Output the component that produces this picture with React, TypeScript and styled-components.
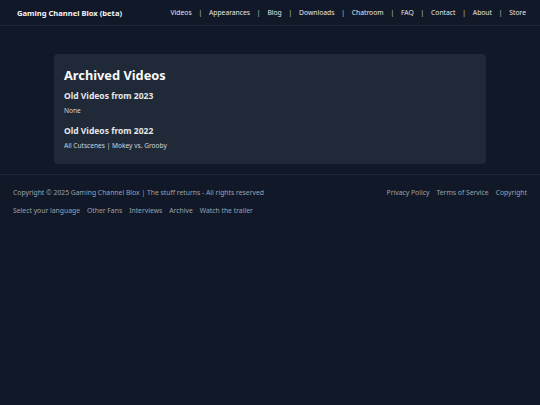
import { Fragment } from 'react';
import styled, { createGlobalStyle } from 'styled-components';

const GlobalStyle = createGlobalStyle`
  html, body {
    margin: 0;
    padding: 0;
    background-color: #111827;
    font-family: 'Noto Sans', 'Open Sans', sans-serif;
    color: #e5e7eb;
  }

  * {
    box-sizing: border-box;
  }
`;

const Page = styled.div`
  min-height: 405px;
  background-color: #111827;
`;

const Header = styled.header`
  display: flex;
  align-items: center;
  justify-content: space-between;
  height: 26px;
  padding: 0 14px 0 17px;
  border-bottom: 1px solid #1f2937;
`;

const Brand = styled.h1`
  margin: 0;
  font-size: 7.6px;
  font-weight: 700;
  color: #f3f4f6;
`;

const Nav = styled.nav`
  display: flex;
  align-items: center;
  gap: 6.8px;
  font-size: 6.75px;
  color: #e5e7eb;
`;

const NavLink = styled.a`
  color: inherit;
  text-decoration: none;
`;

const Separator = styled.span`
  color: #d1d5db;
`;

const Main = styled.main`
  padding: 28px 54px 10px;
`;

const Card = styled.section`
  background-color: #1f2937;
  border-radius: 4px;
  padding: 12px 10px 12px;
`;

const CardTitle = styled.h2`
  margin: 0 0 6px;
  font-size: 12.8px;
  line-height: 18px;
  font-weight: 700;
  color: #f9fafb;
`;

const GroupTitle = styled.h3`
  margin: 0 0 3px;
  font-size: 8.5px;
  line-height: 12px;
  font-weight: 700;
  color: #e5e7eb;
`;

const GroupText = styled.p<{ $last?: boolean }>`
  margin: 0 0 ${({ $last }) => ($last ? '0' : '8px')};
  font-size: 6.6px;
  line-height: 12px;
  color: #d1d5db;
`;

const Footer = styled.footer`
  border-top: 1px solid #1f2937;
  padding: 13px 13px;
  font-size: 6.8px;
  color: #9ca3af;
`;

const FooterTop = styled.div`
  display: flex;
  justify-content: space-between;
  align-items: center;
  margin-bottom: 9px;
`;

const LinkRow = styled.div`
  display: flex;
  gap: 7px;
`;

const FooterLink = styled.a`
  color: inherit;
  text-decoration: none;
`;

const navItems = [
  'Videos',
  'Appearances',
  'Blog',
  'Downloads',
  'Chatroom',
  'FAQ',
  'Contact',
  'About',
  'Store',
];

const legalLinks = ['Privacy Policy', 'Terms of Service', 'Copyright'];

const extraLinks = [
  'Select your language',
  'Other Fans',
  'Interviews',
  'Archive',
  'Watch the trailer',
];

const App = () => {
  return (
    <Page>
      <GlobalStyle />
      <Header>
        <Brand>Gaming Channel Blox (beta)</Brand>
        <Nav>
          {navItems.map((item, i) => (
            <Fragment key={item}>
              {i > 0 && <Separator>|</Separator>}
              <NavLink href='#'>{item}</NavLink>
            </Fragment>
          ))}
        </Nav>
      </Header>
      <Main>
        <Card>
          <CardTitle>Archived Videos</CardTitle>
          <GroupTitle>Old Videos from 2023</GroupTitle>
          <GroupText>None</GroupText>
          <GroupTitle>Old Videos from 2022</GroupTitle>
          <GroupText $last>All Cutscenes | Mokey vs. Grooby</GroupText>
        </Card>
      </Main>
      <Footer>
        <FooterTop>
          <span>Copyright © 2025 Gaming Channel Blox | The stuff returns - All rights reserved</span>
          <LinkRow>
            {legalLinks.map((link) => (
              <FooterLink key={link} href='#'>
                {link}
              </FooterLink>
            ))}
          </LinkRow>
        </FooterTop>
        <LinkRow>
          {extraLinks.map((link) => (
            <FooterLink key={link} href='#'>
              {link}
            </FooterLink>
          ))}
        </LinkRow>
      </Footer>
    </Page>
  );
};

export default App;
